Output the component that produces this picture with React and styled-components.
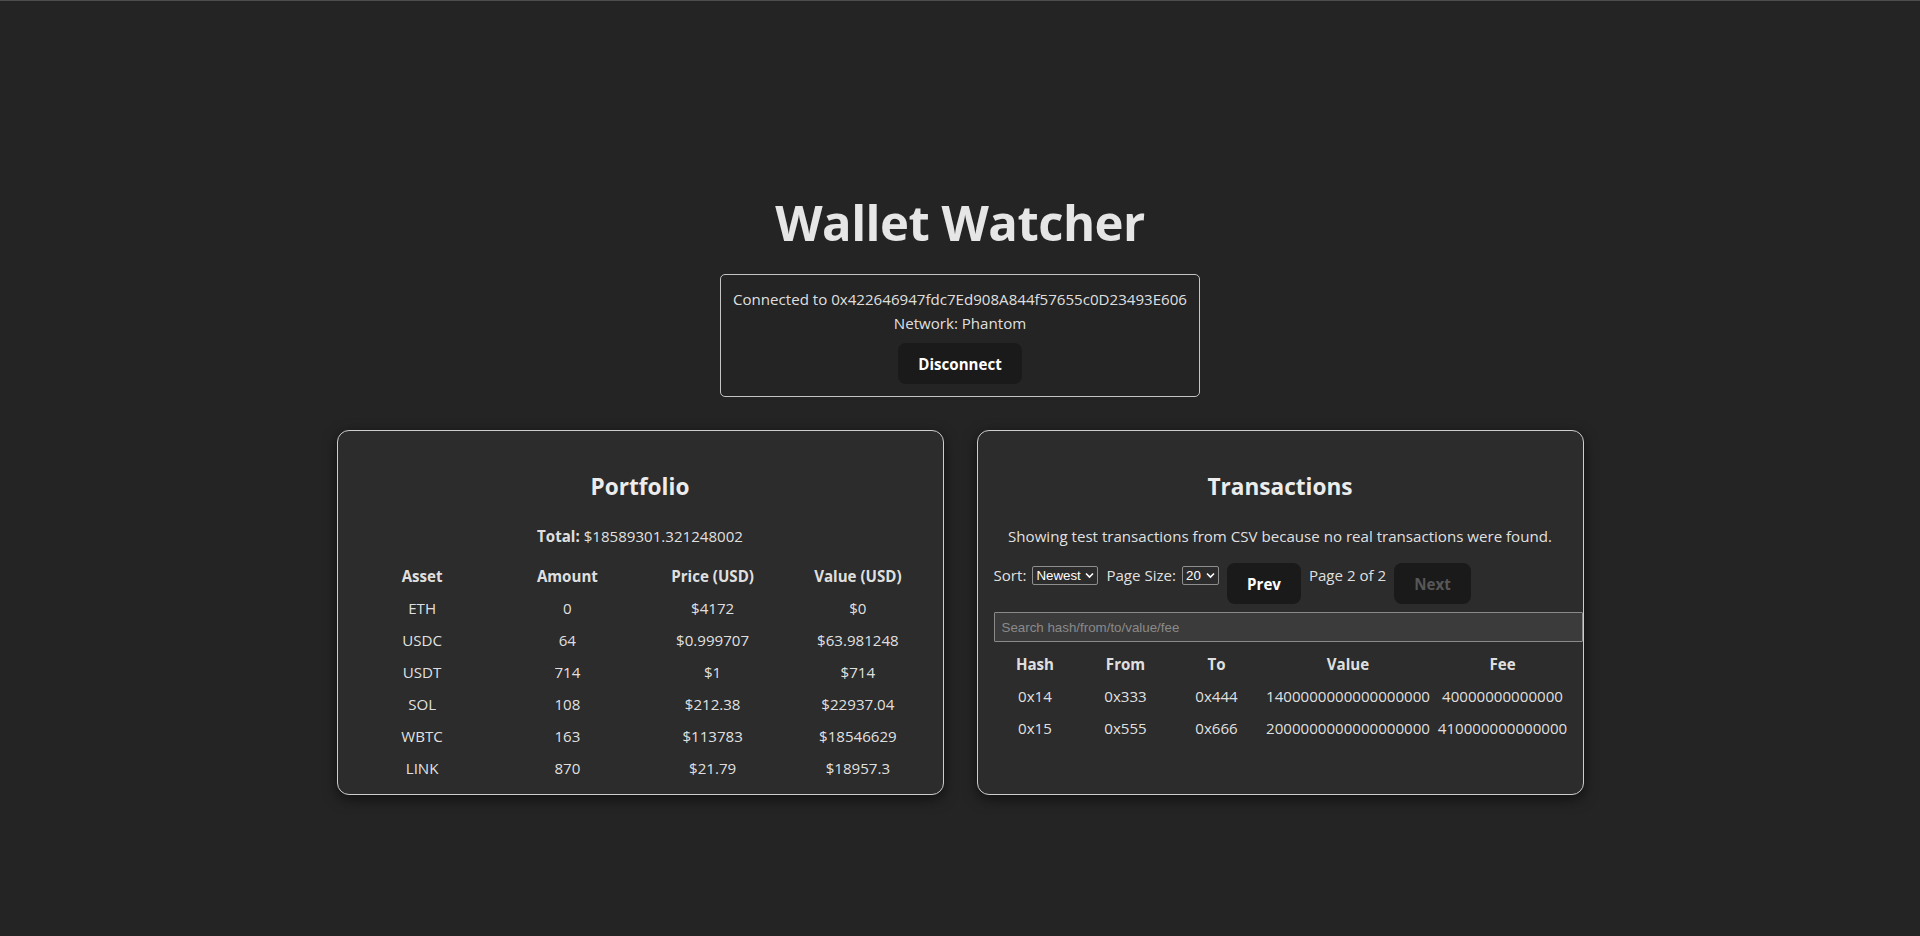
import React from "react";
import styled, { createGlobalStyle } from "styled-components";

const GlobalStyle = createGlobalStyle`
  html, body { margin: 0; padding: 0; }
  body {
    background: #242424;
    color: rgba(255, 255, 255, 0.87);
    font-family: "Open Sans", "Noto Sans", sans-serif;
    font-size: 15.1px;
    line-height: 24px;
    -webkit-font-smoothing: antialiased;
  }
  * { box-sizing: border-box; }
`;

const Page = styled.div`
  min-height: 100vh;
  border-top: 1px solid #4d4d4d;
  padding-top: 194px;
  display: flex;
  flex-direction: column;
  align-items: center;
  text-align: center;
`;

const Title = styled.h1`
  margin: 0;
  font-size: 49px;
  line-height: 54px;
  font-weight: 700;
  letter-spacing: -0.5px;
  color: #e6e6e6;
`;

const ConnectionBox = styled.div`
  margin-top: 25px;
  border: 1px solid #c4c4c4;
  border-radius: 5px;
  padding: 12px;
  display: flex;
  flex-direction: column;
  align-items: center;
`;

const Line = styled.div`
  white-space: nowrap;
`;

const Button = styled.button`
  height: 41px;
  padding: 0 19px;
  border: 1px solid transparent;
  border-radius: 8px;
  background: #1a1a1a;
  color: ${(p) => (p.disabled ? "#575757" : "#ffffff")};
  font-family: "Open Sans", "Noto Sans", sans-serif;
  font-size: 15.1px;
  font-weight: 700;
  cursor: ${(p) => (p.disabled ? "not-allowed" : "pointer")};
  margin-top: ${(p) => p.$mt || 0}px;
  flex: none;
`;

const Cards = styled.div`
  margin-top: 33px;
  display: grid;
  grid-template-columns: repeat(2, 607px);
  gap: 33px;
`;

const Card = styled.section`
  background: #2c2c2c;
  border: 1px solid #cdcdcd;
  border-radius: 12px;
  box-shadow: 0 4px 14px rgba(0, 0, 0, 0.55);
  padding: 12px 12px 10px;
  display: flex;
  flex-direction: column;
`;

const CardTitle = styled.h2`
  margin: 26px 0 19px;
  font-size: 22.6px;
  line-height: 36px;
  font-weight: 700;
  color: #ececec;
`;

const Para = styled.p`
  margin: 0;
  white-space: nowrap;
`;

const Table = styled.table`
  width: 100%;
  border-collapse: collapse;
  margin-top: ${(p) => p.$mt}px;
  table-layout: ${(p) => (p.$fixed ? "fixed" : "auto")};
`;

const Th = styled.th`
  padding: 4px 2px;
  font-weight: 700;
  white-space: nowrap;
  text-align: center;
`;

const Td = styled.td`
  padding: 4px 2px;
  white-space: nowrap;
  text-align: center;
`;

const Controls = styled.div`
  margin-top: 15px;
  padding: 0 4px;
  display: flex;
  align-items: flex-start;
  gap: 8px;
`;

const Label = styled.label`
  display: inline-flex;
  align-items: center;
  height: 24px;
  white-space: nowrap;
`;

const SelectWrap = styled.span`
  position: relative;
  display: inline-flex;
  margin-left: ${(p) => p.$ml}px;
`;

const Select = styled.select`
  appearance: none;
  -webkit-appearance: none;
  width: ${(p) => p.$w}px;
  height: 19px;
  padding: 0 0 0 3px;
  border: 1px solid #8e8e8e;
  border-radius: 2px;
  background: #2c2c2c;
  color: #ffffff;
  font-family: "Liberation Sans", Arial, sans-serif;
  font-size: 13.33px;
  line-height: 17px;
`;

const Chevron = styled.svg`
  position: absolute;
  right: 4px;
  top: 6px;
  width: 9px;
  height: 7px;
  pointer-events: none;
`;

const PageText = styled.span`
  white-space: nowrap;
`;

const Search = styled.input`
  margin: 8px 0 0 4px;
  width: 589px;
  height: 30px;
  padding: 0 7px;
  border: 1px solid #8a8a8a;
  border-radius: 1px;
  background: #3b3b3b;
  color: #ffffff;
  font-family: "Liberation Sans", Arial, sans-serif;
  font-size: 13.33px;
  &::placeholder {
    color: #8a8a8a;
  }
`;

const assets = [
  ["ETH", "0", "$4172", "$0"],
  ["USDC", "64", "$0.999707", "$63.981248"],
  ["USDT", "714", "$1", "$714"],
  ["SOL", "108", "$212.38", "$22937.04"],
  ["WBTC", "163", "$113783", "$18546629"],
  ["LINK", "870", "$21.79", "$18957.3"],
];

const txs = [
  ["0x14", "0x333", "0x444", "1400000000000000000", "40000000000000"],
  ["0x15", "0x555", "0x666", "2000000000000000000", "410000000000000"],
];

const txCols = [91, 90, 92, 171, 138];

function Dropdown({ width, ml, value, options }) {
  return (
    <SelectWrap $ml={ml}>
      <Select $w={width} defaultValue={value}>
        {options.map((o) => (
          <option key={o} value={o}>{o}</option>
        ))}
      </Select>
      <Chevron viewBox="0 0 9 7">
        <path d="M1 1.5 L4.5 5 L8 1.5" fill="none" stroke="#ffffff" strokeWidth="1.6" />
      </Chevron>
    </SelectWrap>
  );
}

export default function App() {
  return (
    <>
      <GlobalStyle />
      <Page>
        <Title>Wallet Watcher</Title>
        <ConnectionBox>
          <Line>Connected to 0x422646947fdc7Ed908A844f57655c0D23493E606</Line>
          <Line>Network: Phantom</Line>
          <Button $mt={8}>Disconnect</Button>
        </ConnectionBox>
        <Cards>
          <Card>
            <CardTitle>Portfolio</CardTitle>
            <Para>
              <strong>Total:</strong> $18589301.321248002
            </Para>
            <Table $mt={12} $fixed>
              <thead>
                <tr>
                  <Th>Asset</Th>
                  <Th>Amount</Th>
                  <Th>Price (USD)</Th>
                  <Th>Value (USD)</Th>
                </tr>
              </thead>
              <tbody>
                {assets.map((r) => (
                  <tr key={r[0]}>
                    {r.map((c, i) => (
                      <Td key={i}>{c}</Td>
                    ))}
                  </tr>
                ))}
              </tbody>
            </Table>
          </Card>
          <Card>
            <CardTitle>Transactions</CardTitle>
            <Para>Showing test transactions from CSV because no real transactions were found.</Para>
            <Controls>
              <Label>
                Sort:
                <Dropdown width={66} ml={6} value="Newest" options={["Newest", "Oldest"]} />
              </Label>
              <Label>
                Page Size:
                <Dropdown width={37} ml={6} value="20" options={["10", "20", "50"]} />
              </Label>
              <Button>Prev</Button>
              <PageText>Page 2 of 2</PageText>
              <Button disabled>Next</Button>
            </Controls>
            <Search placeholder="Search hash/from/to/value/fee" />
            <Table $mt={6} $fixed>
              <colgroup>
                {txCols.map((w, i) => (
                  <col key={i} width={w} />
                ))}
              </colgroup>
              <thead>
                <tr>
                  <Th>Hash</Th>
                  <Th>From</Th>
                  <Th>To</Th>
                  <Th>Value</Th>
                  <Th>Fee</Th>
                </tr>
              </thead>
              <tbody>
                {txs.map((r) => (
                  <tr key={r[0]}>
                    {r.map((c, i) => (
                      <Td key={i}>{c}</Td>
                    ))}
                  </tr>
                ))}
              </tbody>
            </Table>
          </Card>
        </Cards>
      </Page>
    </>
  );
}
